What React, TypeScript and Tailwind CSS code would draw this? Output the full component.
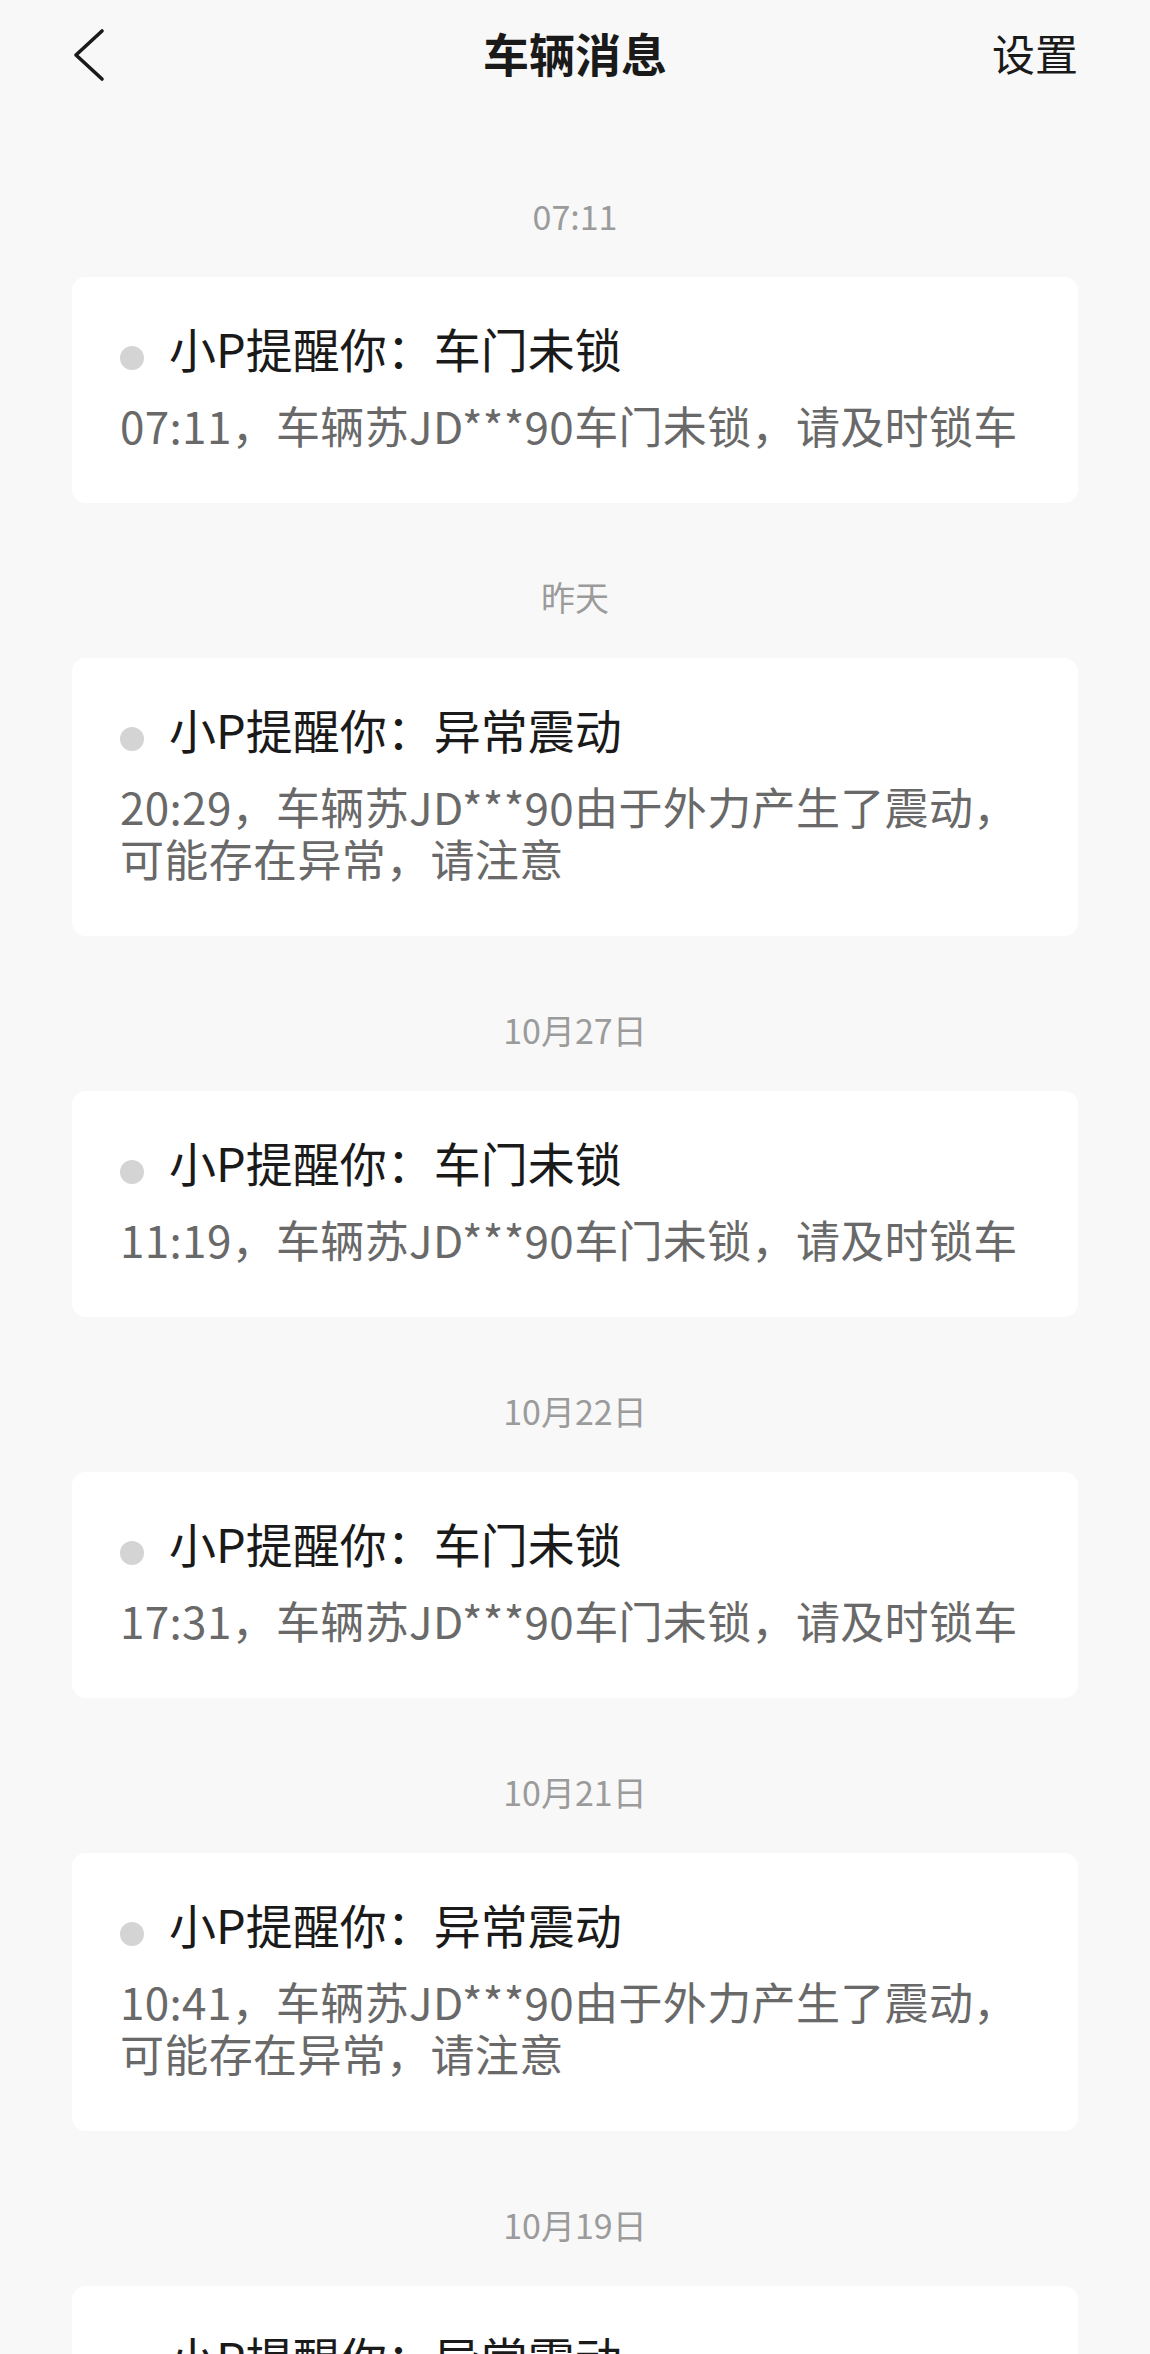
const messages = [
  {
    date: "07:11",
    title: "小P提醒你：车门未锁",
    body: "07:11，车辆苏JD***90车门未锁，请及时锁车",
  },
  {
    date: "昨天",
    title: "小P提醒你：异常震动",
    body: "20:29，车辆苏JD***90由于外力产生了震动，可能存在异常，请注意",
  },
  {
    date: "10月27日",
    title: "小P提醒你：车门未锁",
    body: "11:19，车辆苏JD***90车门未锁，请及时锁车",
  },
  {
    date: "10月22日",
    title: "小P提醒你：车门未锁",
    body: "17:31，车辆苏JD***90车门未锁，请及时锁车",
  },
  {
    date: "10月21日",
    title: "小P提醒你：异常震动",
    body: "10:41，车辆苏JD***90由于外力产生了震动，可能存在异常，请注意",
  },
  {
    date: "10月19日",
    title: "小P提醒你：异常震动",
    body: "09:02，车辆苏JD***90由于外力产生了震动，可能存在异常，请注意",
  },
];

const font = { fontFamily: '"Noto Sans CJK SC", "Noto Sans", sans-serif' };

const Header = () => (
  <div className="grid h-[104px] grid-cols-3 items-center px-[72px]">
    <svg width="34" height="54" viewBox="0 0 34 54" className="ml-[1px] mt-[6px]">
      <path
        d="M29 3 L3 27 L29 51"
        fill="none"
        stroke="#1a1a1a"
        strokeWidth="3.6"
        strokeLinecap="round"
        strokeLinejoin="round"
      />
    </svg>
    <h1 className="justify-self-center whitespace-nowrap text-[46px] font-bold text-[#1a1a1a]">
      车辆消息
    </h1>
    <span className="justify-self-end text-[43px] text-[#1a1a1a]">设置</span>
  </div>
);

export default function App() {
  return (
    <div className="h-[2354px] overflow-hidden bg-[#f8f8f8]" style={font}>
      <Header />
      <div className="pt-[18px]">
        {messages.map((m, i) => (
          <div key={i} className="pt-[74px]">
            <p className="mb-[41px] h-[40px] text-center text-[34px] leading-[40px] text-[#9b9b9b]">
              {m.date}
            </p>
            <div className="mx-[72px] rounded-[14px] bg-white px-[48px] pb-[52px] pt-[43px]">
              <div className="flex h-[56px] items-center">
                <span className="mt-[20px] h-[24px] w-[24px] shrink-0 rounded-full bg-[#d4d4d4]" />
                <span className="ml-[25px] whitespace-nowrap text-[47px] leading-[56px] text-[#1a1a1a]">
                  {m.title}
                </span>
              </div>
              <p className="mt-[23px] text-[44px] leading-[52px] tracking-[0.35px] text-[#696969]">
                {m.body}
              </p>
            </div>
          </div>
        ))}
      </div>
    </div>
  );
}
